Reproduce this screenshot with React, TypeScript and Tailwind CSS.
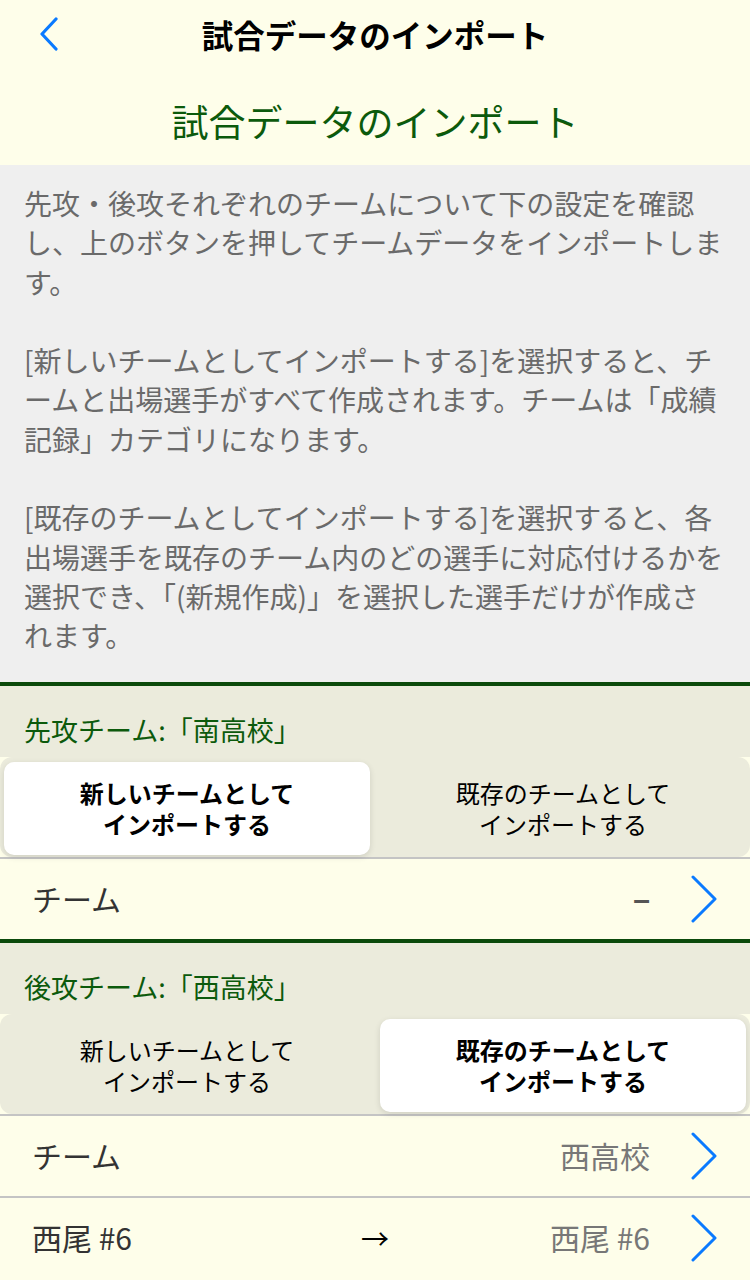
import { ReactNode } from 'react';

const FONT = { fontFamily: '"Noto Sans CJK JP", "Noto Sans", sans-serif' };

// line breaks of the help text, one entry per paragraph
const HELP = [
  ['先攻・後攻それぞれのチームについて下の設定を確認', 'し、上のボタンを押してチームデータをインポートしま', 'す。'],
  ['[新しいチームとしてインポートする]を選択すると、チ', 'ームと出場選手がすべて作成されます。チームは「成績', '記録」カテゴリになります。'],
  ['[既存のチームとしてインポートする]を選択すると、各', '出場選手を既存のチーム内のどの選手に対応付けるかを', '選択でき、「(新規作成)」を選択した選手だけが作成さ', 'れます。'],
];

function Chevron({ className }: { className?: string }) {
  return (
    <svg viewBox="0 0 28 48" className={className} fill="none">
      <path d="M3 2 L25 24 L3 46" stroke="#0a7aff" strokeWidth="3" strokeLinecap="round" strokeLinejoin="round" />
    </svg>
  );
}

function BackChevron() {
  return (
    <svg viewBox="0 0 22 34" className="w-[22px] h-[34px]" fill="none">
      <path d="M18 2 L4 17 L18 32" stroke="#0a7aff" strokeWidth="3.2" strokeLinecap="round" strokeLinejoin="round" />
    </svg>
  );
}

function Segmented({ selected }: { selected: 0 | 1 }) {
  const labels = [
    ['新しいチームとして', 'インポートする'],
    ['既存のチームとして', 'インポートする'],
  ];
  return (
    <div className="bg-[#ebebdc] rounded-xl pt-[5px] pb-[2px] px-[4px] gap-[10px] flex h-[100px]">
      {labels.map((l, i) => (
        <div
          key={i}
          className={
            'flex-1 flex flex-col items-center justify-center rounded-[10px] text-[24px] leading-[31px] text-black ' +
            (i === selected ? 'bg-white font-bold shadow-[0_2px_6px_rgba(0,0,0,0.12)]' : '')
          }
        >
          <div>{l[0]}</div>
          <div>{l[1]}</div>
        </div>
      ))}
    </div>
  );
}

function Row({ left, mid, right }: { left: ReactNode; mid?: ReactNode; right: ReactNode }) {
  return (
    <div className="h-[80px] flex items-center pl-[32px] pr-[32px]">
      <div className="flex-1 text-[30px] text-[#333]">{left}</div>
      <div className="text-[28px] text-black">{mid}</div>
      <div className="flex-1 flex items-center justify-end">
        <span className="text-[30px] text-[#777] mr-[40px]">{right}</span>
        <Chevron className="w-[28px] h-[48px]" />
      </div>
    </div>
  );
}

function TeamSection({ title, selected, children }: { title: string; selected: 0 | 1; children: ReactNode }) {
  return (
    <div className="border-t-4 border-[#0b4a0b]">
      <div className="bg-[#ebebdc] h-[71px] flex items-end pl-[24px] pb-[6px]">
        <span className="text-[27px] text-[#0c5a0c]">{title}</span>
      </div>
      <Segmented selected={selected} />
      <div className="border-t-2 border-[#c4c4c4]">{children}</div>
    </div>
  );
}

export default function App() {
  return (
    <div className="w-[750px] h-[1280px] overflow-hidden bg-[#fefeea]" style={FONT}>
      {/* nav bar */}
      <div className="h-[70px] flex items-center relative">
        <div className="absolute left-[38px] top-[17px]">
          <BackChevron />
        </div>
        <div className="flex-1 text-center text-[31.5px] font-bold text-black">試合データのインポート</div>
      </div>

      <div className="h-[95px] pt-[8px] flex items-center justify-center">
        <span className="text-[37px] text-[#0c5a0c]">試合データのインポート</span>
      </div>

      {/* description */}
      <div className="bg-[#efefef] pl-[24px] pr-[10px] pt-[19px] pb-[26px] text-[28px] leading-[39.3px] text-[#6a6a6a] whitespace-nowrap">
        {HELP.map((para, i) => (
          <p key={i} className={i > 0 ? 'mt-[39.3px]' : ''}>
            {para.map((line, j) => (
              <span key={j} className="block">{line}</span>
            ))}
          </p>
        ))}
      </div>

      <TeamSection title="先攻チーム:「南高校」" selected={0}>
        <Row
          left="チーム"
          right={<span className="text-[#555] font-bold" style={{ fontFamily: '"Liberation Sans", sans-serif' }}>–</span>}
        />
      </TeamSection>

      <TeamSection title="後攻チーム:「西高校」" selected={1}>
        <Row left="チーム" right="西高校" />
        <div className="border-t-2 border-[#c4c4c4]">
          <Row left="西尾 #6" mid="→" right="西尾 #6" />
        </div>
      </TeamSection>
    </div>
  );
}
